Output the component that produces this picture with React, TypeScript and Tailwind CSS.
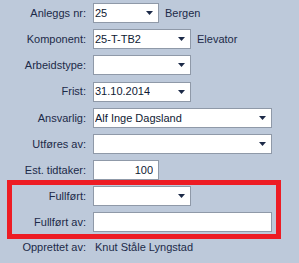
import React from 'react';

type Field = {
    label: string;
    value?: string;
    width: string;
    dropdown?: boolean;
    align?: 'left' | 'right';
    after?: string;
};

const top: Field[] = [
    { label: 'Anleggs nr:', value: '25', width: 'w-[66px]', dropdown: true, after: 'Bergen' },
    { label: 'Komponent:', value: '25-T-TB2', width: 'w-[98px]', dropdown: true, after: 'Elevator' },
    { label: 'Arbeidstype:', width: 'w-[98px]', dropdown: true },
    { label: 'Frist:', value: '31.10.2014', width: 'w-[98px]', dropdown: true },
    { label: 'Ansvarlig:', value: 'Alf Inge Dagsland', width: 'w-[179px]', dropdown: true },
    { label: 'Utføres av:', width: 'w-[179px]', dropdown: true },
    { label: 'Est. tidtaker:', value: '100', width: 'w-[66px]', align: 'right' },
];

const marked: Field[] = [
    { label: 'Fullført:', width: 'w-[98px]', dropdown: true },
    { label: 'Fullført av:', width: 'w-[179px]' },
];

function Arrow() {
    return (
        <svg width="7" height="4" viewBox="0 0 7 4" className="shrink-0">
            <path d="M0 0h7L3.5 4z" fill="#1c2a48" />
        </svg>
    );
}

function Row({ f, labelW = 'w-[87px]' }: { f: Field; labelW?: string }) {
    return (
        <div className="flex items-center h-[20px]">
            <div className={`${labelW} text-right pr-[1px] whitespace-nowrap`}>{f.label}</div>
            <div
                className={`ml-[6px] h-[20px] ${f.width} bg-white border border-[#8f99a8] flex items-center pl-[1px] pr-[5px] ${
                    f.align === 'right' ? 'justify-end pr-[2px]' : 'justify-between'
                }`}
            >
                <span className="whitespace-nowrap overflow-hidden text-[#0f1a33]">{f.value ?? ''}</span>
                {f.dropdown && <Arrow />}
            </div>
            {f.after && <div className="ml-[6px] whitespace-nowrap">{f.after}</div>}
        </div>
    );
}

export default function App() {
    return (
        <div
            className="w-[299px] h-[263px] bg-[#bdc9da] text-[#1c2a48] text-[11px] overflow-hidden pt-[3px]"
            style={{ fontFamily: '"Liberation Sans", Arial, sans-serif' }}
        >
            <div className="flex flex-col gap-[6.2px]">
                {top.map((f) => (
                    <Row key={f.label} f={f} />
                ))}

                {/* rød markering rundt fullført-feltene */}
                <div className="-mt-[6px] ml-[7px] w-[274px] border-[5px] border-[#ed1c24] pt-[1px] pb-[2px] flex flex-col gap-[6px]">
                    {marked.map((f) => (
                        <Row key={f.label} f={f} labelW="w-[75px]" />
                    ))}
                </div>

                <div className="flex items-center h-[20px] -mt-[8px]">
                    <div className="w-[87px] text-right pr-[1px] whitespace-nowrap">Opprettet av:</div>
                    <div className="ml-[8px] whitespace-nowrap">Knut Ståle Lyngstad</div>
                </div>
            </div>
        </div>
    );
}
